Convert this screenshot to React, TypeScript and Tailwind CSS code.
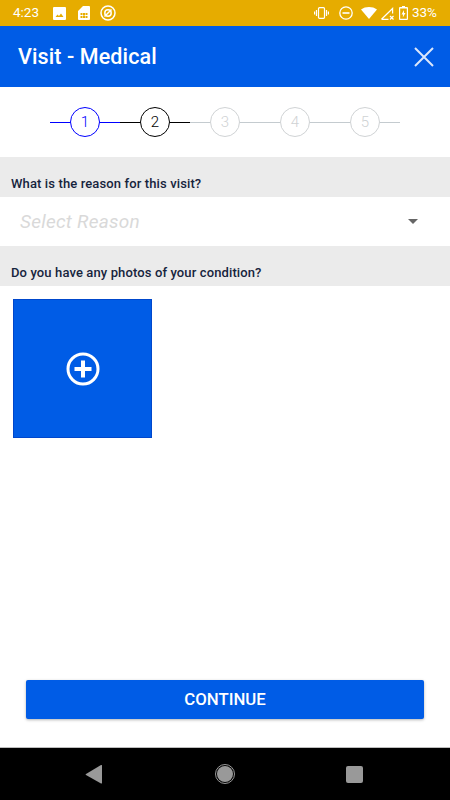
const stepColors = [
  { line: "bg-[#0000ff]", ring: "border-[#0000ff] text-[#0000ff]" },
  { line: "bg-black", ring: "border-black text-black" },
  { line: "bg-[#c4cbcf]", ring: "border-[#d0d3d5] text-[#cfd2d4]" },
  { line: "bg-[#c4cbcf]", ring: "border-[#d0d3d5] text-[#cfd2d4]" },
  { line: "bg-[#c4cbcf]", ring: "border-[#d0d3d5] text-[#cfd2d4]" },
]

function StatusBar() {
  return (
    <div className="h-[26px] bg-[#e6ac00] flex items-center text-white text-[13.500px] shrink-0">
      <span className="ml-[13px] w-[26px] leading-none">4:23</span>
      <svg className="ml-[14px]" width="13" height="13" viewBox="0 0 13 13">
        <path fillRule="evenodd" fill="#fff" d="M1 0h11a1 1 0 0 1 1 1v11a1 1 0 0 1-1 1H1a1 1 0 0 1-1-1V1a1 1 0 0 1 1-1zM2.500 10h8L8 6.500 6 9 4.500 7.500z" />
      </svg>
      <svg className="ml-[12px]" width="12" height="14" viewBox="0 0 12 14">
        <path fillRule="evenodd" fill="#fff" d="M5 0h6a1 1 0 0 1 1 1v12a1 1 0 0 1-1 1H1a1 1 0 0 1-1-1V5zM2.500 7v2h2V7zM5 7v2h2V7zM7.500 7v2h2V7zM2.500 10v2h2v-2zM7.500 10v2h2v-2zM5 9.500v2.500h2V9.500z" />
      </svg>
      <svg className="ml-[10px]" width="16" height="16" viewBox="0 0 16 16" fill="none" stroke="#fff">
        <circle cx="8" cy="8" r="7" strokeWidth="1.500" />
        <circle cx="8" cy="8" r="3.200" strokeWidth="1.500" />
        <path d="M4.500 11.500 L11.500 4.500" strokeWidth="1.500" />
      </svg>
      <svg className="ml-auto" width="15" height="12" viewBox="0 0 15 12" fill="none" stroke="#fff" strokeWidth="1.200">
        <rect x="4.500" y="0.700" width="6" height="10.600" rx="1" />
        <path d="M2.500 3v6M0.600 4.500v3M12.500 3v6M14.400 4.500v3" />
      </svg>
      <svg className="ml-[10px]" width="14" height="14" viewBox="0 0 14 14" fill="none" stroke="#fff" strokeWidth="1.300">
        <circle cx="7" cy="7" r="6.200" />
        <path d="M3.500 7h7" strokeWidth="1.600" />
      </svg>
      <svg className="ml-[8px]" width="16" height="12" viewBox="0 0 16 12">
        <path fill="#fff" d="M0 2.500C4.500-.8 11.500-.8 16 2.500L8 12z" />
      </svg>
      <svg className="ml-[3px]" width="14" height="13" viewBox="0 0 14 13">
        <path fill="none" stroke="#fff" strokeWidth="1.200" d="M1.500 12.300L12.600 1.500v5M1.500 12.300h7" />
        <path stroke="#fff" strokeWidth="1.200" d="M10 9l3.500 3.500M13.500 9L10 12.500" />
      </svg>
      <svg className="ml-[5px]" width="9" height="14" viewBox="0 0 9 14">
        <path fillRule="evenodd" fill="#fff" d="M3 0h3v1h2a1 1 0 0 1 1 1v11a1 1 0 0 1-1 1H1a1 1 0 0 1-1-1V2a1 1 0 0 1 1-1h2zM1.200 2.600v10.200h6.600V2.600zM5 4 2.500 8.500H4L3.800 11.500 6.500 7H5z" />
      </svg>
      <span className="ml-[4px] mr-[13px] leading-none">33%</span>
    </div>
  )
}

function Stepper() {
  return (
    <div className="h-[70px] flex justify-center items-center shrink-0">
      {stepColors.map((s, i) => (
        <div key={i} className="relative w-[70px] h-[30px] flex items-center justify-center">
          <div className={`absolute inset-x-0 top-[14.500px] h-px ${s.line}`} />
          <div className={`relative w-[30px] h-[30px] rounded-full border bg-white flex items-center justify-center text-[15px] font-light ${s.ring}`}>
            {i + 1}
          </div>
        </div>
      ))}
    </div>
  )
}

function SectionLabel({ text }: { text: string }) {
  return (
    <div className="h-[40px] bg-[#ebebeb] flex items-end pb-[4px] pl-[11px] text-[13px] leading-[18px] font-medium tracking-[0.12px] text-[#16243d] shrink-0">
      {text}
    </div>
  )
}

export default function App() {
  return (
    <div className="w-[450px] h-[800px] flex flex-col bg-white font-['Roboto',sans-serif] overflow-hidden">
      <StatusBar />
      <div className="h-[61px] bg-[#005ce6] flex items-center justify-between pl-[18px] pr-[16px] shrink-0">
        <span className="text-white text-[21.500px] font-medium tracking-[0.1px] translate-y-[1px]">Visit - Medical</span>
        <svg width="20" height="20" viewBox="0 0 20 20" stroke="#dbe7fb" strokeWidth="2" fill="none">
          <path d="M1 1l18 18M19 1L1 19" />
        </svg>
      </div>
      <Stepper />
      <SectionLabel text="What is the reason for this visit?" />
      <div className="h-[49px] flex items-center justify-between pl-[20px] pr-[32px] shrink-0">
        <span className="italic text-[19px] text-[#d9d9d9] tracking-[0.25px] translate-y-[1px]">Select Reason</span>
        <div className="w-0 h-0 border-x-[5px] border-x-transparent border-t-[5px] border-t-[#666666]" />
      </div>
      <SectionLabel text="Do you have any photos of your condition?" />
      <div className="flex-1 flex flex-col justify-between px-[13px] pt-[13px] pb-[28px]">
        <div className="w-[139px] h-[139px] bg-[#005ce6] border border-[#0047cc] flex items-center justify-center">
          <svg width="34" height="34" viewBox="0 0 34 34" fill="none" stroke="#fff">
            <circle cx="17" cy="17" r="15" strokeWidth="3" />
            <path d="M17 8.500v17M8.500 17h17" strokeWidth="4" />
          </svg>
        </div>
        <button className="mx-[13px] h-[39px] bg-[#005ce6] rounded-[2px] text-white text-[16.800px] font-medium shadow-[0_1px_3px_rgba(0,0,0,0.3)]">
          CONTINUE
        </button>
      </div>
      <div className="h-[53px] bg-black border-t border-[#bdbdbd] flex items-center shrink-0">
        <svg className="ml-[85px]" width="18" height="19" viewBox="0 0 18 19">
          <path fill="#999999" d="M17 .500v17.500a.800.800 0 0 1-1 .500L1 10a.600.600 0 0 1 0-1L16 0a.700.700 0 0 1 1 .500z" />
        </svg>
        <svg className="ml-[112px]" width="20" height="20" viewBox="0 0 20 20">
          <circle cx="10" cy="10" r="9.500" fill="none" stroke="#999999" />
          <circle cx="10" cy="10" r="8" fill="#999999" />
        </svg>
        <div className="ml-[111px] w-[17px] h-[17px] rounded-[2px] bg-[#999999]" />
      </div>
    </div>
  )
}
